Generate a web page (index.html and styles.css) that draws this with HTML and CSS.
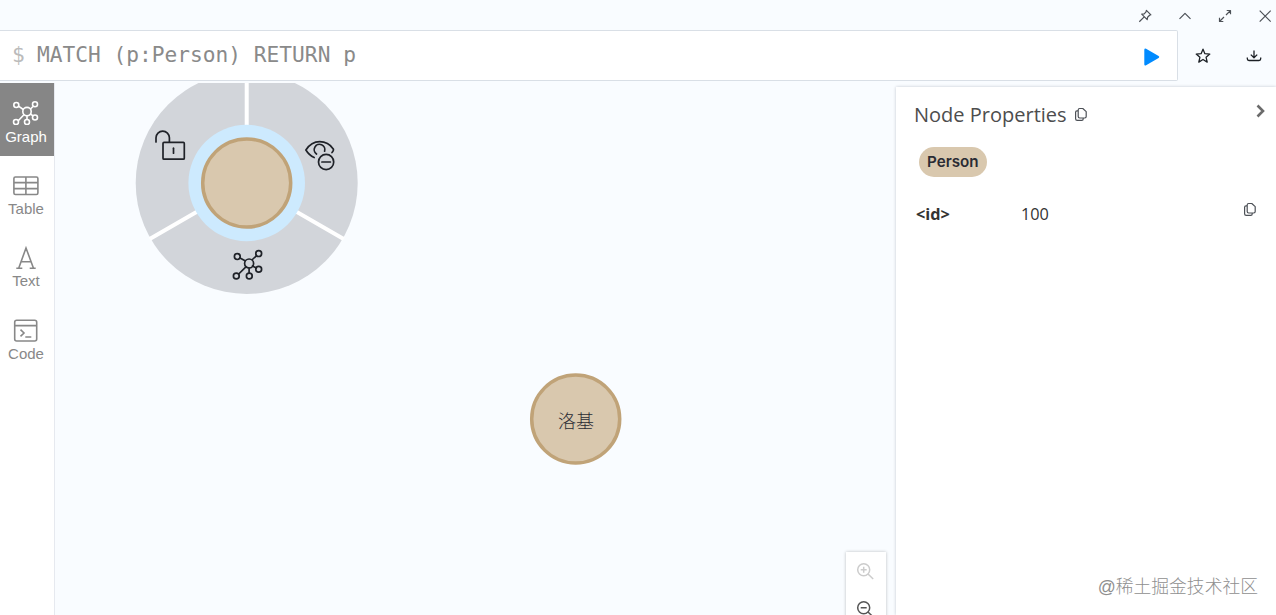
FILE: index.html
```html
<!DOCTYPE html>
<html lang="en">
<head>
    <meta charset="UTF-8">
    <meta name="viewport" content="width=device-width, initial-scale=1.0">
    <title>Graph Browser</title>
    <link rel="stylesheet" href="styles.css">
</head>
<body>
    <div class="frame">
        <div class="titlebar">
            <svg class="icon" width="14" height="14" viewBox="0 0 14 14"><path d="M8.4 1.3 12.9 5.8 11.6 6.3 9.6 8.2 9.2 10.7 3.7 5.2 6.2 4.8 8 2.8zM6.2 7.9 1.3 12.7"/></svg>
            <svg class="icon" width="14" height="14" viewBox="0 0 14 14"><path d="M1.5 9.8 7 4.3 12.5 9.8"/></svg>
            <svg class="icon" width="14" height="14" viewBox="0 0 14 14"><path d="M8 6 12.5 1.5M8.7 1.5h3.8v3.8M6 8 1.5 12.5M1.5 8.7v3.8h3.8"/></svg>
            <svg class="icon" width="14" height="14" viewBox="0 0 14 14"><path d="M1.7 1.7 12.7 12.7M12.7 1.7 1.7 12.7"/></svg>
        </div>

        <div class="query-row">
            <div class="editor">
                <span class="prompt">$</span>
                <span class="query">MATCH (p:Person) RETURN p</span>
                <svg class="play" width="17" height="20" viewBox="0 0 17 20"><path d="M2.5 2.7 15 10 2.5 17.3z"/></svg>
            </div>
            <svg class="icon dark star" width="16" height="16" viewBox="0 0 16 16"><path d="M8 1.2 9.9 5.7 14.8 6.1 11.1 9.3 12.2 14.1 8 11.5 3.8 14.1 4.9 9.3 1.2 6.1 6.1 5.7z"/></svg>
            <svg class="icon dark download" width="16" height="16" viewBox="0 0 16 16"><path d="M8 2.5v7M4.8 6.6 8 9.8 11.2 6.6M1.3 9.6v1.2q0 1.7 1.7 1.7h10q1.7 0 1.7-1.7V9.6"/></svg>
        </div>

        <div class="content">
            <div class="sidebar">
                <div class="tab active">
                    <svg width="28" height="28" viewBox="0 0 28 28">
                        <path d="M11.3 12.5 6.5 9.2M18.5 12 21 9.5M18.5 17 21 18.8M15 19v3M11.7 18 6 24"/>
                        <circle cx="15" cy="14.6" r="4.2"/>
                        <circle cx="4.3" cy="8" r="2.5"/><circle cx="23" cy="7.3" r="2.5"/><circle cx="23" cy="20.5" r="2.5"/><circle cx="15" cy="25" r="2.5"/><circle cx="4" cy="25" r="2.5"/>
                    </svg>
                    <span>Graph</span>
                </div>
                <div class="tab">
                    <svg width="28" height="28" viewBox="0 0 28 28"><rect x="1.9" y="8" width="24" height="17.5" rx="1.5"/><path d="M1.9 13.6h24M1.9 19.6h24M13.9 8v17.5" /></svg>
                    <span>Table</span>
                </div>
                <div class="tab">
                    <svg width="28" height="28" viewBox="0 0 28 28"><path d="M6.7 27.2 14 7 21.5 27.2M9.2 20.7h10M4.3 27.2h6M17.7 27.2h6"/></svg>
                    <span>Text</span>
                </div>
                <div class="tab">
                    <svg width="28" height="28" viewBox="0 0 28 28"><rect x="2.7" y="6.2" width="22" height="20.8" rx="2"/><path d="M2.7 11.6h22M8.5 15.6 12 19 8.5 22.4M13.3 23h6"/></svg>
                    <span>Code</span>
                </div>
            </div>

            <div class="graph">
                <svg class="canvas" width="840" height="532" viewBox="0 0 840 532">
                    <!-- selected node with its context ring -->
                    <g transform="translate(191.7 100)">
                        <circle class="ring" r="111"/>
                        <path class="spokes" d="M0 0V-112M0 0 97 56M0 0-97 56"/>
                        <circle class="halo" r="58.3"/>
                        <circle class="node" r="44"/>
                        <g class="ring-icon">
                            <path d="M-90.7-41v-4.2a6.7 6.7 0 0 1 13.4 0v4"/>
                            <rect x="-83.7" y="-40.6" width="21.3" height="16.8" rx="1"/>
                            <path d="M-73.2-34.8v5"/>
                        </g>
                        <g class="ring-icon">
                            <path d="M67.5-25.5C63.5-27.2 61-30 59.2-33C62.5-38 67-41.3 73-41.3S83.5-38.5 86.6-34Q87.3-32.7 85.3-30.5"/>
                            <path d="M69.8-29A5.3 5.3 0 1 1 77.9-31.8"/>
                            <circle cx="79.4" cy="-21" r="7.6"/>
                            <path d="M75.2-21h8.5"/>
                        </g>
                        <g class="ring-icon">
                            <path d="M-1.6 77.8-6.7 75M5.7 76.5 9.7 72.8M5.8 83 9.6 85M2.4 85.2v5M-.8 83.9-8 91"/>
                            <circle cx="2.4" cy="80.5" r="4.5"/>
                            <circle cx="-9.4" cy="73.6" r="2.9"/><circle cx="12" cy="70.6" r="2.9"/><circle cx="12" cy="86.2" r="2.9"/><circle cx="2.6" cy="93" r="2.9"/><circle cx="-10.4" cy="93" r="2.9"/>
                        </g>
                    </g>
                    <g transform="translate(520.7 336)">
                        <circle class="node" r="44"/>
                        <text class="caption" x="0.3" y="8.5">洛基</text>
                    </g>
                </svg>
                <div class="zoom">
                    <svg class="disabled" width="20" height="20" viewBox="0 0 20 20"><circle cx="8.7" cy="8.7" r="6"/><path d="M13 13l5.2 5M5.7 8.7h6M8.7 5.7v6"/></svg>
                    <svg width="20" height="20" viewBox="0 0 20 20"><circle cx="8.7" cy="8.7" r="6"/><path d="M13 13l5.2 5M5.7 8.7h6"/></svg>
                </div>
            </div>

            <div class="panel">
                <div class="panel-header">
                    <span class="panel-title">Node Properties</span>
                    <svg class="icon copy" width="14" height="15" viewBox="0 0 14 15"><path d="M5.6 1.5h3.2L12.2 4.6v5q0 1.4-1.4 1.4H5.6q-1.4 0-1.4-1.4V2.9q0-1.4 1.4-1.4zM4.2 3.8H3Q1.6 3.8 1.6 5.2v6.6q0 1.6 1.6 1.6h4.6q1.4 0 1.4-1.4v-1"/></svg>
                    <svg class="chevron" width="10" height="14" viewBox="0 0 10 14"><path d="M1.5 1.5 7 7 1.5 12.5"/></svg>
                </div>
                <span class="label">Person</span>
                <div class="property">
                    <span class="key">&lt;id&gt;</span>
                    <span class="value">100</span>
                    <svg class="icon copy" width="14" height="15" viewBox="0 0 14 15"><path d="M5.6 1.5h3.2L12.2 4.6v5q0 1.4-1.4 1.4H5.6q-1.4 0-1.4-1.4V2.9q0-1.4 1.4-1.4zM4.2 3.8H3Q1.6 3.8 1.6 5.2v6.6q0 1.6 1.6 1.6h4.6q1.4 0 1.4-1.4v-1"/></svg>
                </div>
                <div class="watermark">@稀土掘金技术社区</div>
            </div>
        </div>
    </div>
</body>
</html>
```
FILE: styles.css
```css
body {
    margin: 0;
    font-family: "Open Sans", "Noto Sans CJK SC", sans-serif;
    background-color: #f9fcff;
    color: #333;
    overflow: hidden;
}

svg {
    display: block;
    flex: none;
    fill: none;
}

.frame {
    display: flex;
    flex-direction: column;
    height: 100vh;
}

.titlebar {
    display: flex;
    justify-content: flex-end;
    gap: 26px;
    height: 30px;
    padding: 9px 4px 0 0;
    box-sizing: border-box;
}

.icon {
    stroke: #4d5157;
    stroke-width: 1.2;
    stroke-linejoin: round;
}

.icon.dark {
    stroke: #1c2025;
    stroke-width: 1.3;
}

.query-row {
    display: flex;
    align-items: center;
    height: 51px;
}

.editor {
    display: flex;
    align-items: center;
    width: 1178px;
    height: 51px;
    padding: 0 17px 0 12px;
    box-sizing: border-box;
    background-color: #fff;
    border: 1px solid #d9dfe6;
    border-left: none;
    border-radius: 0 2px 2px 0;
    font-family: "DejaVu Sans Mono", monospace;
    font-size: 21.2px;
    line-height: 48px;
    white-space: pre;
}

.prompt {
    position: relative;
    top: -1px;
    width: 25px;
    color: #bbb;
}

.query {
    color: #8a8a8a;
    position: relative;
    top: -1px;
}

.play {
    margin: 3px 0 0 auto;
    fill: #018bff;
    stroke: #018bff;
    stroke-width: 2.4;
    stroke-linejoin: round;
}

.star {
    margin-left: 17px;
}

.download {
    margin-left: 35px;
}

.content {
    display: flex;
    flex: 1;
    min-height: 0;
    padding-top: 2px;
}

.sidebar {
    width: 54px;
    background-color: #fff;
    border-right: 1px solid #e6e9ef;
}

.tab {
    display: flex;
    flex-direction: column;
    align-items: center;
    height: 72.4px;
    padding: 14px 2px 0 0;
    box-sizing: border-box;
    color: #888;
    font-family: "Liberation Sans", Arial, sans-serif;
    font-size: 15px;
    line-height: 17px;
}

.tab svg {
    margin-bottom: 3px;
    stroke: #888;
    stroke-width: 1.6;
}

.tab.active {
    height: 73px;
    background-color: #868686;
    color: #fff;
}

.tab.active + .tab {
    margin-top: -1px;
}

.tab.active svg {
    stroke: #fff;
}

.graph {
    position: relative;
    flex: 1;
    min-width: 0;
    overflow: hidden;
}

.ring {
    fill: #d2d5da;
}

.spokes {
    stroke: #fff;
    stroke-width: 4;
}

.halo {
    fill: #cdeafe;
}

.node {
    fill: #d9c8ae;
    stroke: #c0a378;
    stroke-width: 3.5;
}

.ring-icon {
    stroke: #1f2228;
    stroke-width: 1.7;
    stroke-linecap: round;
}

.caption {
    fill: #2a2c34;
    font-family: "Noto Sans CJK SC", sans-serif;
    font-size: 18px;
    font-weight: 300;
    text-anchor: middle;
}

.zoom {
    position: absolute;
    right: 10px;
    bottom: -16px;
    display: flex;
    flex-direction: column;
    align-items: center;
    gap: 18px;
    width: 40px;
    height: 79px;
    padding: 9px 2px 0 0;
    box-sizing: border-box;
    background-color: #fff;
    box-shadow: 0 0 3px rgba(0, 0, 0, 0.25);
}

.zoom svg {
    stroke: #555;
    stroke-width: 1.5;
}

.zoom .disabled {
    stroke: #ccc;
}

.panel {
    display: flex;
    flex-direction: column;
    align-items: flex-start;
    width: 380px;
    margin-top: 4px;
    padding: 14px 12px 14px 18px;
    box-sizing: border-box;
    background-color: #fff;
    box-shadow: 0 0 3px rgba(0, 20, 40, 0.22);
}

.panel-header {
    display: flex;
    align-items: center;
    width: 100%;
    height: 27px;
}

.panel-title {
    margin-right: 7px;
    color: #4d4d4d;
    font-size: 20px;
}

.chevron {
    margin: -7px -2px 0 auto;
    stroke: #6b6b6b;
    stroke-width: 2.6;
}

.label {
    margin: 19px 0 0 5px;
    padding: 0 8px;
    border-radius: 15px;
    background-color: #d9c8ae;
    color: #2a2c34;
    font-family: Inter, sans-serif;
    font-size: 15.2px;
    font-weight: 600;
    line-height: 30px;
}

.property {
    display: flex;
    width: 100%;
    margin-top: 25px;
    font-size: 16.3px;
    line-height: 24px;
}

.key {
    width: 107px;
    padding-left: 2px;
    box-sizing: border-box;
    font-weight: 700;
}

.property .copy {
    margin: 0 7px 0 auto;
}

.watermark {
    align-self: flex-end;
    margin: auto 6px 0 0;
    color: #8f8f8f;
    font-family: "Liberation Sans", "Noto Sans CJK SC", sans-serif;
    font-size: 17.8px;
    font-weight: 300;
    line-height: 28px;
}
```
